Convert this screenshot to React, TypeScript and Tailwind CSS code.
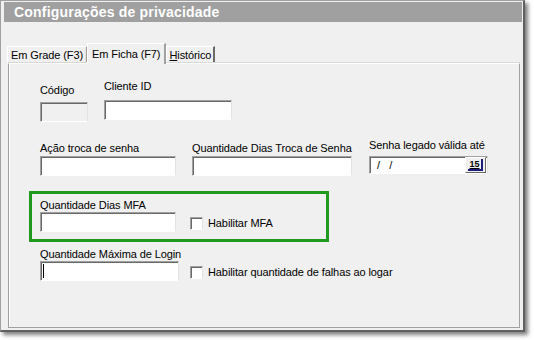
import type { ReactNode } from 'react'

// campo "afundado" no estilo clássico do Windows
function Field({ className = '', disabled = false, children }: { className?: string; disabled?: boolean; children?: ReactNode }) {
  return (
    <div
      className={`border border-t-[#a0a0a0] border-l-[#a0a0a0] border-b-white border-r-[#e3e3e3] shadow-[inset_1px_1px_0_#696969] ${
        disabled ? 'bg-[#f0f0f0]' : 'bg-white'
      } ${className}`}
    >
      {children}
    </div>
  )
}

function Check({ label }: { label: string }) {
  return (
    <div className="flex items-center">
      <div className="w-[13px] h-[13px] bg-white border border-t-[#a0a0a0] border-l-[#a0a0a0] border-b-white border-r-[#e3e3e3] shadow-[inset_1px_1px_0_#696969]" />
      <span className="ml-[5px] text-[11px] leading-[14px] tracking-[-0.1px]">{label}</span>
    </div>
  )
}

function Label({ children }: { children: ReactNode }) {
  return <div className="text-[11px] leading-[14px] tracking-[-0.1px] whitespace-nowrap">{children}</div>
}

export default function App() {
  return (
    <div className="w-[534px] h-[340px] bg-white text-black font-['Liberation_Sans',Arial,sans-serif]">
      <div className="w-[525px] h-[332px] bg-[#f0f0f0] border-l border-t border-l-[#a0a0a0] border-t-[#a0a0a0] border-r-2 border-b-2 border-r-[#5f5f5f] border-b-[#5f5f5f] shadow-[3px_3px_4px_rgba(0,0,0,0.5)] flex flex-col pl-[3px] pr-[1px] pt-[1px]">
        {/* título */}
        <div className="h-[20px] bg-[#a0a0a0] text-white font-bold text-[14px] tracking-[0.2px] leading-[20px] pl-[10px]">
          Configurações de privacidade
        </div>

        {/* abas */}
        <div className="mt-[21px] h-[20px] flex items-end pl-[3px] text-[11px] tracking-[-0.1px]">
          <div className="h-[17px] px-[3px] flex items-center border-l border-t border-l-white border-t-white border-r border-r-[#a0a0a0] shadow-[inset_-1px_0_0_#e3e3e3]">
            Em Grade (F3)
          </div>
          <div className="relative z-10 -mb-px h-[21px] px-[4px] flex items-start pt-[2px] bg-[#f0f0f0] border-l border-t border-l-white border-t-white border-r-2 border-r-[#a0a0a0]">
            Em Ficha (F7)
          </div>
          <div className="h-[17px] px-[2px] flex items-center border-l border-t border-l-white border-t-white border-r-2 border-r-[#696969]">
            <span>
              <span className="underline">H</span>istórico
            </span>
          </div>
        </div>

        {/* painel */}
        <div className="flex-1 ml-[4px] mr-[2px] mb-[2px] border border-t-white border-l-[#a0a0a0] border-b-[#a0a0a0] border-r-[#a0a0a0] shadow-[inset_1px_0_0_white,0_-1px_0_#d8d8d8] pl-[31px]">
          {/* linha 1 */}
          <div className="flex items-start">
            <div className="mt-[19px] w-[48px]">
              <Label>Código</Label>
              <Field disabled className="mt-[5px] h-[20px]" />
            </div>
            <div className="mt-[15px] ml-[16px]">
              <Label>Cliente ID</Label>
              <Field className="mt-[7px] h-[20px] w-[128px]" />
            </div>
          </div>

          {/* linha 2 */}
          <div className="mt-[11px] flex items-start">
            <div className="pt-[8px]">
              <Label>Ação troca de senha</Label>
              <Field className="mt-[1px] h-[20px] w-[136px]" />
            </div>
            <div className="ml-[16px] pt-[8px]">
              <Label>Quantidade Dias Troca de Senha</Label>
              <Field className="mt-[1px] h-[20px] w-[160px]" />
            </div>
            <div className="ml-[17px] pt-[5px]">
              <Label>Senha legado válida até</Label>
              <Field className="mt-[4px] h-[18px] w-[119px] flex items-center justify-between pl-[7px] pr-[1px]">
                <span className="text-[11px] whitespace-pre">/   /</span>
                <div className="h-[16px] w-[21px] bg-[#f0f0f0] border border-t-white border-l-white border-b-[#696969] border-r-[#696969] flex items-center justify-center">
                  <span className="text-[9px] leading-[10px] font-bold px-[1px] border-b-2 border-r-2 border-b-[#1c1c7a] border-r-[#1c1c7a] underline">
                    15
                  </span>
                </div>
              </Field>
            </div>
          </div>

          {/* MFA */}
          <div className="mt-[15px] -ml-[11px] w-[300px] border-[3px] border-[#1f9a1f] pl-[8px] pt-[4px] pb-[7px]">
            <Label>Quantidade Dias MFA</Label>
            <div className="flex items-center">
              <Field className="h-[20px] w-[136px]" />
              <div className="ml-[14px] mt-[2px]">
                <Check label="Habilitar MFA" />
              </div>
            </div>
          </div>

          {/* login */}
          <div className="mt-[5px]">
            <Label>Quantidade Máxima de Login</Label>
            <div className="flex items-center">
              <Field className="h-[20px] w-[139px] pl-[2px] pt-[2px]">
                <div className="w-px h-[14px] bg-black" />
              </Field>
              <div className="ml-[11px] mt-[2px]">
                <Check label="Habilitar quantidade de falhas ao logar" />
              </div>
            </div>
          </div>
        </div>
      </div>
    </div>
  )
}
